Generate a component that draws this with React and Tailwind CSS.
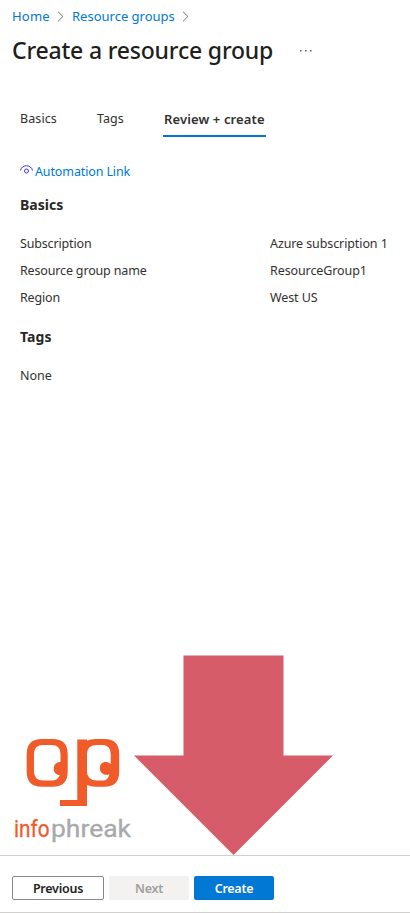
import React from "react";

function Chevron() {
  return (
    <svg className="h-[11px] w-[7px]" viewBox="0 0 7 11" fill="none" stroke="#797775" strokeWidth="1">
      <path d="M1 0.7 5.900 5.500 1 10.300" />
    </svg>
  );
}

function Row({ label, value }) {
  return (
    <div className="flex h-[27px] items-center tracking-[-0.16px]">
      <span className="w-[250px]">{label}</span>
      <span className="tracking-[-0.1px]">{value}</span>
    </div>
  );
}

function Logo() {
  return (
    <svg className="h-[110px] w-[120px]" viewBox="12 735 120 110">
      <g fill="#f15a29" fillRule="evenodd">
        <path d="M42 739h10.500Q67.700 739 67.700 754v18q0 14.700-15.200 14.700H42Q26.700 786.700 26.700 772v-18Q26.700 739 42 739zM43 745q-9 0-9 9v17.500q0 9 9 9h8.500q6.500 0 8.300-5.500c-8.200 0-8.200-13 .7-13v-8q0-9-9-9z" />
        <path d="M77.300 739.500H87v1.300q3.500-1.800 8.500-1.800h9q14.700 0 14.700 15v18q0 14.700-14.700 14.700h-9q-5 0-8.500-1.800V806H60v-6h17.300zM97 745q-10 0-10 9v17.500q0 9 10 9h6q5 0 6.500-6.300c-4.500 2-9.700-1-9.700-6 0-6 6.200-8 10.900-4.200v-10q0-9-8.700-9z" />
      </g>
      <g fontFamily="Roboto, sans-serif" fontSize="24.500" strokeWidth="0.3">
        <text x="14" y="837" fill="#f15a29" stroke="#f15a29" textLength="35.500" lengthAdjust="spacingAndGlyphs">info</text>
        <text x="51" y="837" fill="#a7a9ac" stroke="#a7a9ac" textLength="80" lengthAdjust="spacingAndGlyphs">phreak</text>
      </g>
    </svg>
  );
}

export default function App() {
  return (
    <div className="relative flex h-[913px] w-[410px] flex-col overflow-hidden bg-white font-['Noto_Sans',sans-serif] text-[12.5px] leading-[18px] text-[#323130]">
      <nav className="flex h-8 items-center pl-3 text-[13px] text-[#0078d4]">
        <span className="w-[45px] tracking-[0.2px]">Home</span>
        <Chevron />
        <span className="ml-2 w-[110px]">Resource groups</span>
        <Chevron />
      </nav>
      <header className="flex h-9 items-center pl-3 text-[#201f1e]">
        <h1 className="w-[288px] whitespace-nowrap text-[23px] font-medium leading-9 tracking-[-0.19px]">Create a resource group</h1>
        <svg className="h-[3px] w-3" viewBox="0 0 12 3" fill="#605e5c">
          <path d="M0 1h1.500v1.500H0zM5 1h1.500v1.500H5zM10 1h1.500v1.500H10z" />
        </svg>
      </header>
      <div className="mt-[36px] flex h-[33px] pl-5">
        <span className="w-[77px] pt-[6px] tracking-[0.1px]">Basics</span>
        <span className="w-[66px] pt-[6px]">Tags</span>
        <span className="w-[103px] whitespace-nowrap border-b-2 border-[#0078d4] pl-px pt-[6px] text-[13px] font-semibold tracking-[0.12px]">Review + create</span>
      </div>
      <main className="flex flex-1 flex-col pl-5">
        <a className="mt-[26px] flex h-[18px] items-center text-[#0078d4]">
          <svg className="mb-[6px] mr-[2px] h-[9px] w-[13px]" viewBox="0 0 13 9" fill="none" stroke="#3b30f0">
            <path d="M.5 5.500C1.500-.8 11.500-.8 12.500 5.500" />
            <circle cx="6.500" cy="6" r="2" />
          </svg>
          <span className="tracking-[-0.12px]">Automation Link</span>
        </a>
        <h2 className="mt-[15px] text-[14px] font-bold text-[#292827]">Basics</h2>
        <div className="mt-4">
          <Row label="Subscription" value="Azure subscription 1" />
          <Row label="Resource group name" value="ResourceGroup1" />
          <Row label="Region" value="West US" />
        </div>
        <h2 className="mt-[17px] text-[14px] font-bold tracking-[0.1px] text-[#292827]">Tags</h2>
        <p className="mt-[21px]">None</p>
      </main>
      <div className="flex h-[200px] items-start">
        <div className="ml-3 mt-20 w-[120px]"><Logo /></div>
        <svg className="ml-[2px] h-[200px] w-[200px]" viewBox="134 655 200 200">
          <path fill="#d75c6a" d="M183.500 655.500h100v100h49.500L233.500 855 134 755.500h49.500z" />
        </svg>
      </div>
      <footer className="flex h-[58px] gap-[5px] border-y border-[#d2d0ce] pl-3 pt-5 font-semibold tracking-[-0.25px]">
        <button className="h-6 w-[92px] rounded-[2px] border border-[#8a8886] pt-[2px] text-[#201f1e]">Previous</button>
        <button className="h-6 w-20 rounded-[2px] bg-[#f3f2f1] pt-[2px] text-[#a19f9d]">Next</button>
        <button className="h-6 w-20 rounded-[2px] bg-[#0078d4] pt-[2px] text-white">Create</button>
      </footer>
    </div>
  );
}
